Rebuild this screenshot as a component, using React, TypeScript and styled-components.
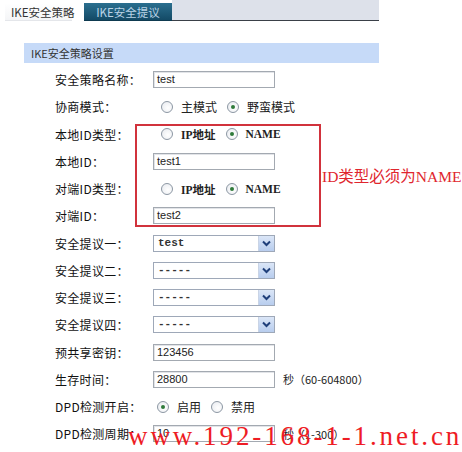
import React from 'react';
import styled, { createGlobalStyle } from 'styled-components';

const GlobalStyle = createGlobalStyle`
  body {
    margin: 0;
    background: #ffffff;
    font-family: 'Noto Sans CJK SC', 'Liberation Sans', sans-serif;
  }
`;

const Page = styled.div`
  position: relative;
  width: 462px;
  height: 452px;
  overflow: hidden;
  background: #ffffff;
`;

const TabBar = styled.div`
  display: flex;
  align-items: flex-end;
  width: 379px;
  height: 21px;
`;

const Tab = styled.div<{ $active?: boolean }>`
  box-sizing: border-box;
  height: 18px;
  padding: 0 6px;
  margin-right: ${(p) => (p.$active ? '12px' : '0')};
  margin-left: ${(p) => (p.$active ? '5px' : '0')};
  width: ${(p) => (p.$active ? '67px' : '88px')};
  font-size: 11.5px;
  line-height: 18px;
  white-space: nowrap;
  text-align: center;
  color: ${(p) => (p.$active ? '#333333' : '#b9d3e6')};
  background: ${(p) =>
    p.$active
      ? 'linear-gradient(#ffffff, #f4f5f7)'
      : 'linear-gradient(#2b6f8f, #134a66)'};
  border-bottom: 1px solid ${(p) => (p.$active ? '#e4e6ea' : '#0e3a50')};
`;

const TabFill = styled.div`
  flex: 1;
  align-self: stretch;
  background: #dde1ea;
  border-bottom: 1px solid #3a4048;
`;

const SectionHeader = styled.div`
  margin: 22px 0 0 24px;
  width: 348px;
  height: 20px;
  padding-left: 7px;
  background: #c6daf8;
  color: #333333;
  font-size: 11px;
  line-height: 20px;
`;

const Form = styled.div`
  margin-top: 3px;
`;

const Row = styled.div`
  display: grid;
  grid-template-columns: 98px auto;
  align-items: center;
  height: 27.25px;
  padding-left: 55px;
`;

const Label = styled.span`
  font-size: 12px;
  color: #111111;
  white-space: nowrap;
  letter-spacing: 0.3px;
`;

const Controls = styled.div`
  display: flex;
  align-items: center;
`;

const TextBox = styled.div`
  box-sizing: border-box;
  width: 122px;
  height: 17px;
  padding-left: 3px;
  border: 1px solid #a3a9b1;
  box-shadow: inset 1px 1px 0 #e2e4e8;
  font-family: 'Liberation Sans', sans-serif;
  font-size: 11px;
  line-height: 15px;
  color: #222222;
`;

const SelectBox = styled.div`
  box-sizing: border-box;
  display: flex;
  width: 122px;
  height: 17px;
  border: 1px solid #9ea8b8;
  font-family: 'Liberation Mono', monospace;
  font-size: 11px;
  font-weight: bold;
  line-height: 15px;
  color: #333333;
`;

const SelectValue = styled.span`
  flex: 1;
  padding-left: 4px;
`;

const SelectArrow = styled.span`
  display: flex;
  align-items: center;
  justify-content: center;
  width: 15px;
  background: linear-gradient(#dbe6f7, #b8cdee);
  border-left: 1px solid #c9d4e6;
`;

const RadioGroup = styled.div<{ $offset: number }>`
  display: flex;
  align-items: center;
  margin-left: ${(p) => p.$offset}px;
`;

const RadioCircle = styled.span<{ $checked?: boolean }>`
  position: relative;
  box-sizing: border-box;
  width: 12px;
  height: 12px;
  border-radius: 50%;
  border: 1px solid #8c97a3;
  background: radial-gradient(circle at 60% 60%, #ffffff, #e6e9ee);
  margin-right: 8px;

  &::after {
    content: '';
    display: ${(p) => (p.$checked ? 'block' : 'none')};
    position: absolute;
    left: 3px;
    top: 3px;
    width: 4px;
    height: 4px;
    border-radius: 50%;
    background: #2f7a3a;
  }
`;

const RadioText = styled.span<{ $latin?: boolean }>`
  margin-right: 10px;
  font-family: ${(p) =>
    p.$latin
      ? "'Liberation Serif', 'Noto Sans CJK SC', serif"
      : "'Noto Sans CJK SC', sans-serif"};
  font-size: ${(p) => (p.$latin ? '11.5px' : '12px')};
  font-weight: ${(p) => (p.$latin ? 'bold' : 'normal')};
  color: #222222;
  white-space: nowrap;
`;

const Hint = styled.span`
  margin-left: 8px;
  font-size: 11px;
  color: #222222;
  white-space: nowrap;
`;

const Highlight = styled.div`
  position: absolute;
  left: 135px;
  top: 124px;
  width: 186px;
  height: 103px;
  box-sizing: border-box;
  border: 2px solid #d1323c;
`;

const Note = styled.div`
  position: absolute;
  left: 322px;
  top: 164px;
  font-family: 'Liberation Serif', 'Noto Sans CJK SC', serif;
  font-size: 15.5px;
  color: #e0262e;
  white-space: nowrap;
`;

const Watermark = styled.div`
  position: absolute;
  left: 128px;
  top: 423px;
  font-family: 'Liberation Serif', serif;
  font-size: 27px;
  line-height: 27px;
  letter-spacing: 2.9px;
  color: #ee1c24;
  white-space: nowrap;
`;

const Chevron = () => (
  <svg width="9" height="7" viewBox="0 0 9 7">
    <path d="M1 1.5 L4.5 5 L8 1.5" fill="none" stroke="#1f3f7a" strokeWidth="2" />
  </svg>
);

type RadioOption = { text: string; checked?: boolean; latin?: boolean };

const Radios: React.FC<{ options: RadioOption[]; offset?: number }> = ({ options, offset = 8 }) => (
  <RadioGroup $offset={offset}>
    {options.map((o) => (
      <React.Fragment key={o.text}>
        <RadioCircle $checked={o.checked} />
        <RadioText $latin={o.latin}>{o.text}</RadioText>
      </React.Fragment>
    ))}
  </RadioGroup>
);

const Select: React.FC<{ value: string }> = ({ value }) => (
  <SelectBox>
    <SelectValue>{value}</SelectValue>
    <SelectArrow>
      <Chevron />
    </SelectArrow>
  </SelectBox>
);

const idTypes: RadioOption[] = [
  { text: 'IP地址', latin: true },
  { text: 'NAME', checked: true, latin: true },
];

export default function App() {
  return (
    <Page>
      <GlobalStyle />
      <TabBar>
        <Tab $active>IKE安全策略</Tab>
        <Tab>IKE安全提议</Tab>
        <TabFill />
      </TabBar>
      <SectionHeader>IKE安全策略设置</SectionHeader>
      <Form>
        <Row>
          <Label>安全策略名称：</Label>
          <Controls>
            <TextBox>test</TextBox>
          </Controls>
        </Row>
        <Row>
          <Label>协商模式：</Label>
          <Radios options={[{ text: '主模式' }, { text: '野蛮模式', checked: true }]} />
        </Row>
        <Row>
          <Label>本地ID类型：</Label>
          <Radios options={idTypes} />
        </Row>
        <Row>
          <Label>本地ID：</Label>
          <Controls>
            <TextBox>test1</TextBox>
          </Controls>
        </Row>
        <Row>
          <Label>对端ID类型：</Label>
          <Radios options={idTypes} />
        </Row>
        <Row>
          <Label>对端ID：</Label>
          <Controls>
            <TextBox>test2</TextBox>
          </Controls>
        </Row>
        <Row>
          <Label>安全提议一：</Label>
          <Controls>
            <Select value="test" />
          </Controls>
        </Row>
        <Row>
          <Label>安全提议二：</Label>
          <Controls>
            <Select value="-----" />
          </Controls>
        </Row>
        <Row>
          <Label>安全提议三：</Label>
          <Controls>
            <Select value="-----" />
          </Controls>
        </Row>
        <Row>
          <Label>安全提议四：</Label>
          <Controls>
            <Select value="-----" />
          </Controls>
        </Row>
        <Row>
          <Label>预共享密钥：</Label>
          <Controls>
            <TextBox>123456</TextBox>
          </Controls>
        </Row>
        <Row>
          <Label>生存时间：</Label>
          <Controls>
            <TextBox>28800</TextBox>
            <Hint>秒（60-604800）</Hint>
          </Controls>
        </Row>
        <Row>
          <Label>DPD检测开启：</Label>
          <Radios offset={4} options={[{ text: '启用', checked: true }, { text: '禁用' }]} />
        </Row>
        <Row>
          <Label>DPD检测周期：</Label>
          <Controls>
            <TextBox>10</TextBox>
            <Hint>秒（1-300）</Hint>
          </Controls>
        </Row>
      </Form>
      <Highlight />
      <Note>ID类型必须为NAME</Note>
      <Watermark>www.192-168-1-1.net.cn</Watermark>
    </Page>
  );
}
